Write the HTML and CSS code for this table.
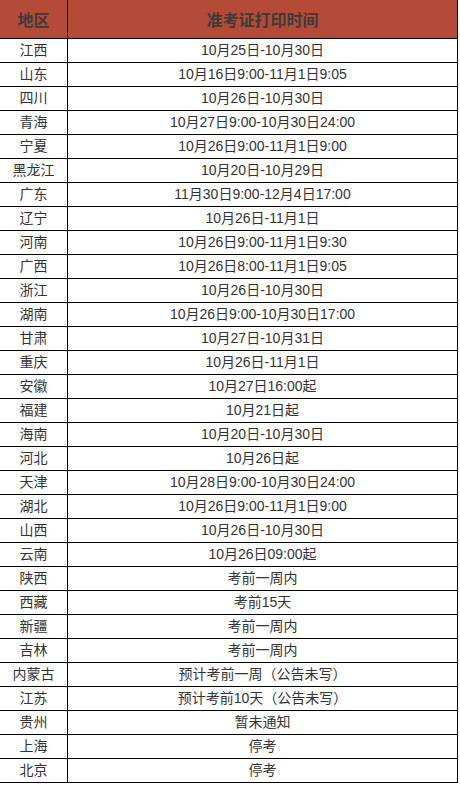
FILE: index.html
```html
<!DOCTYPE html>
<html lang="zh">
<head>
<meta charset="utf-8">
<link rel="stylesheet" href="styles.css">
</head>
<body>
<table class="schedule">
<thead>
<tr><th class="region">地区</th><th class="time">准考证打印时间</th></tr>
</thead>
<tbody>
<tr><td class="region">江西</td><td class="time">10月25日-10月30日</td></tr>
<tr><td class="region">山东</td><td class="time">10月16日9:00-11月1日9:05</td></tr>
<tr><td class="region">四川</td><td class="time">10月26日-10月30日</td></tr>
<tr><td class="region">青海</td><td class="time">10月27日9:00-10月30日24:00</td></tr>
<tr><td class="region">宁夏</td><td class="time">10月26日9:00-11月1日9:00</td></tr>
<tr><td class="region">黑龙江</td><td class="time">10月20日-10月29日</td></tr>
<tr><td class="region">广东</td><td class="time">11月30日9:00-12月4日17:00</td></tr>
<tr><td class="region">辽宁</td><td class="time">10月26日-11月1日</td></tr>
<tr><td class="region">河南</td><td class="time">10月26日9:00-11月1日9:30</td></tr>
<tr><td class="region">广西</td><td class="time">10月26日8:00-11月1日9:05</td></tr>
<tr><td class="region">浙江</td><td class="time">10月26日-10月30日</td></tr>
<tr><td class="region">湖南</td><td class="time">10月26日9:00-10月30日17:00</td></tr>
<tr><td class="region">甘肃</td><td class="time">10月27日-10月31日</td></tr>
<tr><td class="region">重庆</td><td class="time">10月26日-11月1日</td></tr>
<tr><td class="region">安徽</td><td class="time">10月27日16:00起</td></tr>
<tr><td class="region">福建</td><td class="time">10月21日起</td></tr>
<tr><td class="region">海南</td><td class="time">10月20日-10月30日</td></tr>
<tr><td class="region">河北</td><td class="time">10月26日起</td></tr>
<tr><td class="region">天津</td><td class="time">10月28日9:00-10月30日24:00</td></tr>
<tr><td class="region">湖北</td><td class="time">10月26日9:00-11月1日9:00</td></tr>
<tr><td class="region">山西</td><td class="time">10月26日-10月30日</td></tr>
<tr><td class="region">云南</td><td class="time">10月26日09:00起</td></tr>
<tr><td class="region">陕西</td><td class="time">考前一周内</td></tr>
<tr><td class="region">西藏</td><td class="time">考前15天</td></tr>
<tr><td class="region">新疆</td><td class="time">考前一周内</td></tr>
<tr><td class="region">吉林</td><td class="time">考前一周内</td></tr>
<tr><td class="region">内蒙古</td><td class="time">预计考前一周（公告未写）</td></tr>
<tr><td class="region">江苏</td><td class="time">预计考前10天（公告未写）</td></tr>
<tr><td class="region">贵州</td><td class="time">暂未通知</td></tr>
<tr><td class="region">上海</td><td class="time">停考</td></tr>
<tr><td class="region">北京</td><td class="time">停考</td></tr>
</tbody>
</table>
</body>
</html>
```
FILE: styles.css
```css
html, body {
  margin: 0;
  padding: 0;
  background: #ffffff;
}
body {
  font-family: "Liberation Sans", "Noto Sans CJK SC", sans-serif;
  color: #333333;
}
.schedule {
  border-collapse: separate;
  border-spacing: 0;
  width: 458px;
  table-layout: fixed;
  border-right: 1px solid #000;
}
.schedule th,
.schedule td {
  padding: 0;
  text-align: center;
  vertical-align: middle;
  border-bottom: 1px solid #000;
  white-space: nowrap;
}
.schedule th {
  height: 38px;
  background: #b54b37;
  color: #3b3b3b;
  font-size: 16px;
  font-weight: bold;
}
.schedule td {
  height: 23px;
  font-size: 14px;
  line-height: 23px;
}
.schedule .region {
  width: 67px;
  border-right: 1px solid #000;
}
```
